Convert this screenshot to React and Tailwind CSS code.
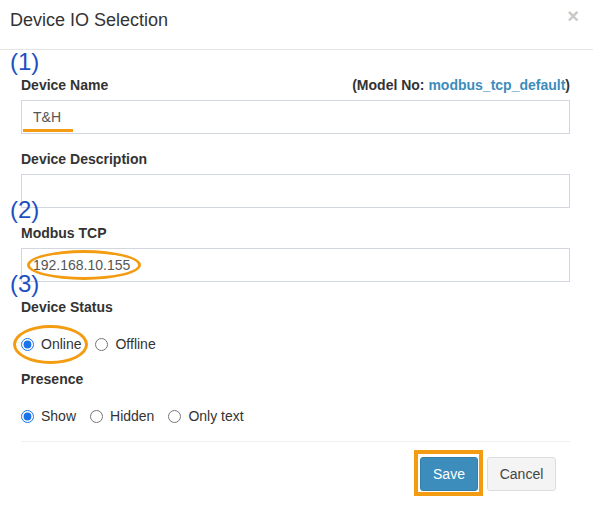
import React from 'react';

const ORANGE = 'border-[#f39c12]';

function Label({ children, right }) {
  return (
    <div className="flex items-center justify-between h-4 mb-[7px]">
      <span className="text-[14px] font-bold text-[#333]">{children}</span>
      {right}
    </div>
  );
}

function TextInput({ value, children }) {
  return (
    <div className="relative h-[34px] border border-[#d2d6de] bg-white px-[11px] flex items-center text-[14px] text-[#555]">
      {value}
      {children}
    </div>
  );
}

function Radio({ label, checked }) {
  return (
    <label className="flex items-center gap-[7px] text-[14px] text-[#333]">
      <input type="radio" readOnly checked={checked} className="m-0 w-[13px] h-[13px] accent-[#1a73e8]" />
      {label}
    </label>
  );
}

function Note({ n, className }) {
  return (
    <span className={`absolute left-[10px] text-[24px] leading-none text-[#1e4fc2] ${className}`}>({n})</span>
  );
}

export default function App() {
  return (
    <div className="relative w-[593px] h-[521px] bg-white font-['Liberation_Sans',Arial,sans-serif] overflow-hidden">
      <div className="h-[50px] border-b border-[#e5e5e5] flex items-center justify-between pl-[10px] pr-[14px]">
        <h4 className="text-[18px] text-[#333] -mt-[9px]">Device IO Selection</h4>
        <span className="text-[20px] font-bold text-[#c8c8c8] leading-none -mt-[18px]">×</span>
      </div>

      <div className="pl-[21px] pr-[23px] pt-[27px]">
        <div className="mb-[17px]">
          <Label
            right={
              <span className="text-[14px] font-bold text-[#333]">
                (Model No: <span className="text-[#3c8dbc]">modbus_tcp_default</span>)
              </span>
            }
          >
            Device Name
          </Label>
          <TextInput value="T&H">
            <span className="absolute left-[1px] top-[28px] w-[50px] h-[3px] bg-[#f39c12]" />
          </TextInput>
        </div>

        <div className="mb-[17px]">
          <Label>Device Description</Label>
          <TextInput value="" />
        </div>

        <div className="mb-[17px]">
          <Label>Modbus TCP</Label>
          <TextInput value="192.168.10.155">
            <span className={`absolute left-[5px] top-[1px] w-[114px] h-[30px] rounded-[50%] border-[3px] ${ORANGE}`} />
          </TextInput>
        </div>

        <div>
          <Label>Device Status</Label>
          <div className="relative flex items-center gap-[14px] h-5 mt-[19px]">
            <Radio label="Online" checked />
            <Radio label="Offline" />
            <span className={`absolute -left-[8px] -top-[9px] w-[75px] h-[39px] rounded-[50%] border-[3px] ${ORANGE}`} />
          </div>
        </div>

        <div className="mt-[17px]">
          <Label>Presence</Label>
          <div className="flex items-center gap-[14px] h-5 mt-[19px]">
            <Radio label="Show" checked />
            <Radio label="Hidden" />
            <Radio label="Only text" />
          </div>
        </div>

        <div className="mt-[15px] border-t border-[#f0f0f0] pt-[15px] flex justify-end gap-[9px] pr-[14px]">
          <div className="relative">
            <button className="w-[58px] h-[34px] rounded-[3px] bg-[#3c8dbc] border border-[#367fa9] text-white text-[14px]">
              Save
            </button>
            <span className={`absolute -left-[6px] -top-[7px] w-[69px] h-[46px] border-4 ${ORANGE}`} />
          </div>
          <button className="w-[69px] h-[34px] rounded-[3px] bg-[#f4f4f4] border border-[#ddd] text-[#444] text-[14px]">
            Cancel
          </button>
        </div>
      </div>

      <Note n="1" className="top-[50px]" />
      <Note n="2" className="top-[198px]" />
      <Note n="3" className="top-[272px]" />
    </div>
  );
}
